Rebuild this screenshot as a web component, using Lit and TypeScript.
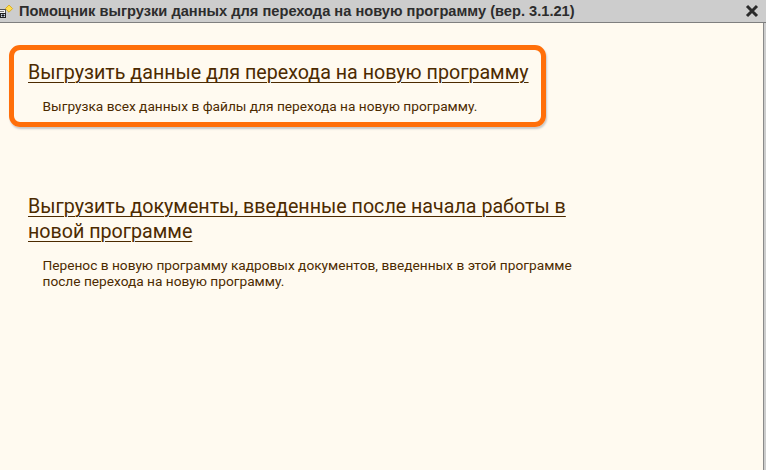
import { LitElement, html, css } from "lit";
import { customElement } from "lit/decorators.js";

@customElement("app-root")
export class AppRoot extends LitElement {
  static styles = css`
    :host { display: flex; flex-direction: column; width: 766px; height: 470px; overflow: hidden; background: #cdcdcd; font-family: Roboto, sans-serif; }
    .title { flex: none; display: flex; align-items: center; height: 22px; border-bottom: 1px solid #7f7f7f; background: #cdcdcd; }
    .app-icon { flex: none; width: 18px; height: 18px; margin-right: 1px; }
    .title-text { flex: 1; font: bold 14.65px "Liberation Sans", sans-serif; color: #2c2c2c; white-space: nowrap; }
    .close { flex: none; width: 14px; height: 14px; margin-right: 7px; }
    .body { flex: 1; margin-right: 2px; border-right: 1px solid #8a8a8a; background: #fffaf0; padding: 22px 0 0 9px; display: flex; flex-direction: column; }
    .item { box-sizing: border-box; color: #4c2a00; }
    .first { width: 537px; height: 82px; border: 5px solid #ff6f0a; border-radius: 11px; box-shadow: 1px 2px 2px #c8c8c8; padding: 10px 0 0 14px; }
    .second { width: 580px; margin-top: 67px; padding-left: 19px; }
    .head { display: block; font-size: 19.66px; line-height: 25px; color: #4c2a00; text-decoration: underline; text-underline-offset: 3px; text-decoration-thickness: 1px; }
    .desc { font-size: 13.7px; line-height: 16px; color: #4c2a00; padding-left: 14.5px; }
    .first .desc { margin-top: 13px; }
    .second .desc { margin-top: 13px; }
  `;
  render() {
    return html`
      <div class="title">
        <svg class="app-icon" viewBox="0 0 18 18">
          <rect x="-2.5" y="7.5" width="8" height="6" fill="#f4f4f4" stroke="#555"/>
          <path d="M0 9.5h4" stroke="#777"/>
          <rect x="0.5" y="11.5" width="5" height="4" fill="#cfdcec" stroke="#222"/>
          <path d="M3 12v3M1.5 13.5h3" stroke="#111"/>
          <path d="M9 3l3.6 3.6L9 10.2 5.4 6.6z" fill="#ffdf50" stroke="#d9ad2c"/>
        </svg>
        <span class="title-text">Помощник выгрузки данных для перехода на новую программу (вер. 3.1.21)</span>
        <svg class="close" viewBox="0 0 14 14"><path d="M2 2l10 10M12 2L2 12" stroke="#2b2b2b" stroke-width="3"/></svg>
      </div>
      <div class="body">
        <div class="item first">
          <a class="head">Выгрузить данные для перехода на новую программу</a>
          <div class="desc">Выгрузка всех данных в файлы для перехода на новую программу.</div>
        </div>
        <div class="item second">
          <a class="head">Выгрузить документы, введенные после начала работы в новой программе</a>
          <div class="desc">Перенос в новую программу кадровых документов, введенных в этой программе после перехода на новую программу.</div>
        </div>
      </div>
    `;
  }
}
